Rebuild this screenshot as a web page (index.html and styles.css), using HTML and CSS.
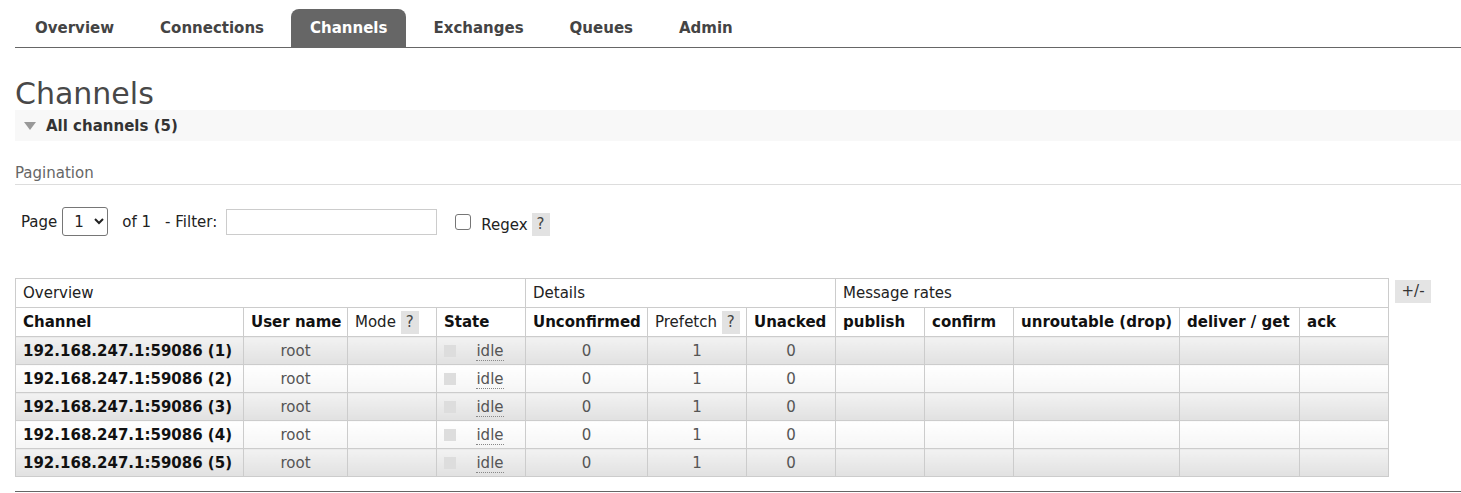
FILE: index.html
```html
<!DOCTYPE html>
<html lang="en">
<head>
  <meta charset="UTF-8">
  <title>RabbitMQ Management - Channels</title>
  <link rel="stylesheet" href="styles.css">
</head>
<body>
<div class="main">
  <!-- top navigation -->
  <ul class="tabs">
    <li><a href="#">Overview</a></li>
    <li><a href="#">Connections</a></li>
    <li><a href="#" class="active">Channels</a></li>
    <li><a href="#">Exchanges</a></li>
    <li><a href="#">Queues</a></li>
    <li><a href="#">Admin</a></li>
  </ul>

  <h1>Channels</h1>

  <div class="section-head">
    <span class="arrow"></span>
    <span>All channels (5)</span>
  </div>

  <h3 class="pagination-title">Pagination</h3>
  <div class="filter-row">
    <label for="page">Page</label>
    <select id="page" class="page-select">
      <option>1</option>
    </select>
    <span class="of">of 1</span>
    <label for="filter" class="filter-label">- Filter:</label>
    <input type="text" id="filter" class="filter-input">
    <input type="checkbox" id="regex" class="regex-box">
    <label for="regex" class="regex-label">Regex</label>
    <span class="help help-regex">?</span>
  </div>

  <div class="table-wrap">
    <table class="list">
      <colgroup>
        <col style="width:228px">
        <col style="width:104px">
        <col style="width:89px">
        <col style="width:89px">
        <col style="width:122px">
        <col style="width:99px">
        <col style="width:89px">
        <col style="width:89px">
        <col style="width:89px">
        <col style="width:166px">
        <col style="width:120px">
        <col style="width:89px">
      </colgroup>
      <thead>
        <tr class="group-row">
          <th colspan="4">Overview</th>
          <th colspan="3">Details</th>
          <th colspan="5">Message rates</th>
        </tr>
        <tr class="name-row">
          <th>Channel</th>
          <th>User name</th>
          <th class="plain">Mode <span class="help">?</span></th>
          <th>State</th>
          <th>Unconfirmed</th>
          <th class="plain">Prefetch <span class="help">?</span></th>
          <th>Unacked</th>
          <th>publish</th>
          <th>confirm</th>
          <th>unroutable (drop)</th>
          <th>deliver / get</th>
          <th>ack</th>
        </tr>
      </thead>
      <tbody id="channel-rows">
        <!-- rows are filled in by the script below -->
      </tbody>
    </table>
    <span class="toggle">+/-</span>
  </div>

  <div class="footer"></div>
</div>

<script>
  // channel list
  const channels = [1, 2, 3, 4, 5].map(n => ({
    name: `192.168.247.1:59086 (${n})`,
    user: 'root',
    state: 'idle',
    unconfirmed: 0,
    prefetch: 1,
    unacked: 0
  }));

  const tbody = document.getElementById('channel-rows');

  channels.forEach((ch, i) => {
    const tr = document.createElement('tr');
    tr.className = i % 2 === 0 ? 'alt1' : 'alt2';
    tr.innerHTML = `
      <td class="name">${ch.name}</td>
      <td class="c">${ch.user}</td>
      <td></td>
      <td><div class="state"><span class="state-box"></span><span class="state-text"><abbr>${ch.state}</abbr></span></div></td>
      <td class="c">${ch.unconfirmed}</td>
      <td class="c">${ch.prefetch}</td>
      <td class="c">${ch.unacked}</td>
      <td></td><td></td><td></td><td></td><td></td>`;
    tbody.appendChild(tr);
  });
</script>
</body>
</html>
```

FILE: styles.css
```css
body {
  margin: 0;
  font-family: "DejaVu Sans", Verdana, sans-serif;
  font-size: 15px;
  color: #484848;
  background-color: #fff;
}

.main {
  padding-left: 15px;
}

.tabs {
  display: flex;
  gap: 8px;
  list-style: none;
  margin: 0;
  padding: 9px 0 0 1px;
  border-bottom: 1px solid #666;
}

.tabs a {
  display: block;
  height: 38px;
  line-height: 39px;
  padding: 0 19px;
  font-weight: bold;
  color: #444;
  text-decoration: none;
  border-radius: 8px 8px 0 0;
}

.tabs a.active {
  background-color: #666;
  color: #fff;
}

h1 {
  margin: 30px 0 0;
  font-size: 30px;
  font-weight: normal;
  line-height: 32px;
  color: #484848;
}

.section-head {
  display: flex;
  align-items: center;
  height: 31px;
  padding-left: 9px;
  background-color: #f8f8f8;
  font-weight: bold;
  color: #333;
}

.arrow {
  width: 0;
  height: 0;
  border-left: 6px solid transparent;
  border-right: 6px solid transparent;
  border-top: 8px solid #999;
  margin-right: 10px;
}

.pagination-title {
  margin: 23px 0 0;
  padding-bottom: 2px;
  font-size: 15px;
  font-weight: normal;
  line-height: 18px;
  color: #666;
  border-bottom: 1px solid #ddd;
}

.filter-row {
  display: flex;
  align-items: center;
  height: 29px;
  margin-top: 22px;
  padding-left: 6px;
  color: #222;
}

.page-select {
  width: 46px;
  height: 29px;
  margin-left: 5px;
  padding: 0 0 0 7px;
  font: inherit;
  color: #222;
  border: 1px solid #767676;
  border-radius: 3px;
  background-color: #fff;
}

.of {
  margin-left: 14px;
}

.filter-label {
  margin-left: 14px;
}

.filter-input {
  width: 211px;
  height: 26px;
  margin: 0 0 0 9px;
  box-sizing: border-box;
  border: 1px solid #ccc;
}

.regex-box {
  appearance: none;
  width: 16px;
  height: 16px;
  margin: 0 0 0 18px;
  border: 1px solid #767676;
  border-radius: 3px;
  background-color: #fff;
}

.regex-label {
  margin-left: 10px;
  padding-top: 6px;
}

.help {
  display: inline-block;
  width: 18px;
  height: 23px;
  line-height: 23px;
  text-align: center;
  background-color: #e2e2e2;
  color: #444;
  font-weight: normal;
  vertical-align: middle;
}

.help-regex {
  margin-left: 4px;
  margin-top: 5px;
}

.table-wrap {
  display: flex;
  align-items: flex-start;
  gap: 6px;
  margin-top: 42px;
}

.list {
  border-collapse: collapse;
  table-layout: fixed;
  width: 1374px;
}

.list th,
.list td {
  border: 1px solid #ccc;
  padding: 0 7px;
  white-space: nowrap;
  overflow: hidden;
}

.list th {
  text-align: left;
  background-color: #fff;
}

.group-row th {
  height: 28px;
  font-weight: normal;
  color: #222;
}

.name-row th {
  height: 28px;
  color: #111;
}

.name-row th.plain {
  font-weight: normal;
  color: #222;
}

.list td {
  height: 27px;
  color: #555;
}

.list td.name {
  font-weight: bold;
  color: #111;
}

.list td.c {
  text-align: center;
}

.alt1 td {
  background: linear-gradient(#f2f2f2, #e1e1e1);
}

.alt2 td {
  background: linear-gradient(#fff, #f5f5f5);
}

.state {
  display: flex;
  align-items: center;
}

.state-box {
  width: 12px;
  height: 12px;
  background-color: #ddd;
}

.state-text {
  flex: 1;
  padding-left: 6px;
  text-align: center;
}

abbr {
  text-decoration: none;
  border-bottom: 1px dotted #888;
}

.toggle {
  margin-top: 2px;
  width: 36px;
  height: 23px;
  line-height: 23px;
  text-align: center;
  background-color: #e4e4e4;
  color: #333;
}

.footer {
  margin-top: 14px;
  border-top: 1px solid #666;
}
```
